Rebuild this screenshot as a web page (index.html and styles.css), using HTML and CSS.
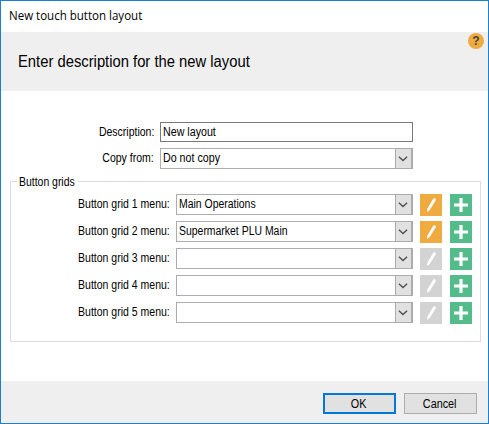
FILE: index.html
```html
<!DOCTYPE html>
<html lang="en">
<head>
<meta charset="utf-8">
<title>New touch button layout</title>
<link rel="stylesheet" href="styles.css">
</head>
<body>
<svg class="defs" width="0" height="0">
  <symbol id="chevron" viewBox="0 0 15 19"><path d="M2.9 7.8 7 11.5 11.1 7.8" fill="none" stroke="#505050" stroke-width="1.4"/></symbol>
  <symbol id="pencil" viewBox="0 0 22 22"><path d="M14.2 4 16 5 15.5 6.7 9.7 16 7.1 18 7.3 14.8 12.8 5.4Z" fill="#fff"/></symbol>
  <symbol id="plus" viewBox="0 0 22 22"><path d="M9.4 4H12.6V9.4H18V12.6H12.6V18H9.4V12.6H4V9.4H9.4Z" fill="#fff"/></symbol>
</svg>
<main class="window">
  <div class="titlebar"><span class="title">New touch button layout</span></div>
  <header class="header">
    <h1>Enter description for the new layout</h1>
    <svg class="help" viewBox="0 0 16 16"><circle cx="8" cy="8" r="8" fill="#f0ab40"/><text x="8" y="12.3" text-anchor="middle">?</text></svg>
  </header>
  <section class="content">
    <div class="field"><label><span>Description:</span></label><div class="input"><span>New layout</span></div></div>
    <div class="field copy"><label><span>Copy from:</span></label><div class="combo"><span>Do not copy</span><svg class="arrow"><use href="#chevron"/></svg></div></div>
    <fieldset class="group">
      <legend><span>Button grids</span></legend>
      <div class="row"><label><span>Button grid 1 menu:</span></label><div class="combo"><span>Main Operations</span><svg class="arrow"><use href="#chevron"/></svg></div><svg class="icon edit"><use href="#pencil"/></svg><svg class="icon add"><use href="#plus"/></svg></div>
      <div class="row"><label><span>Button grid 2 menu:</span></label><div class="combo"><span>Supermarket PLU Main</span><svg class="arrow"><use href="#chevron"/></svg></div><svg class="icon edit"><use href="#pencil"/></svg><svg class="icon add"><use href="#plus"/></svg></div>
      <div class="row"><label><span>Button grid 3 menu:</span></label><div class="combo"><span></span><svg class="arrow"><use href="#chevron"/></svg></div><svg class="icon off"><use href="#pencil"/></svg><svg class="icon add"><use href="#plus"/></svg></div>
      <div class="row"><label><span>Button grid 4 menu:</span></label><div class="combo"><span></span><svg class="arrow"><use href="#chevron"/></svg></div><svg class="icon off"><use href="#pencil"/></svg><svg class="icon add"><use href="#plus"/></svg></div>
      <div class="row"><label><span>Button grid 5 menu:</span></label><div class="combo"><span></span><svg class="arrow"><use href="#chevron"/></svg></div><svg class="icon off"><use href="#pencil"/></svg><svg class="icon add"><use href="#plus"/></svg></div>
    </fieldset>
  </section>
  <footer class="footer"><button class="ok"><span>OK</span></button><button><span>Cancel</span></button></footer>
</main>
</body>
</html>
```

FILE: styles.css
```css
* { box-sizing: border-box; }
body { margin: 0; font: 12px/14px "Liberation Sans", Arial, sans-serif; color: #000; }
.defs { display: block; }
svg { flex: none; }
.window { width: 489px; height: 424px; border: 1px solid #1a80d5; background: #fff; display: flex; flex-direction: column; }
.titlebar { height: 31px; padding: 7px 8px; font: 12px/16px "Open Sans", "Noto Sans", sans-serif; }
.title { display: inline-block; transform: scaleX(.96); transform-origin: left; }
.header { height: 59px; background: #efefef; display: flex; justify-content: space-between; align-items: flex-start; padding: 1px 4px 0 17px; }
h1 { margin: 20px 0 0; font-size: 16px; line-height: 18px; font-weight: 400; white-space: nowrap; transform: scaleX(.924); transform-origin: left; }
.help { width: 16px; height: 16px; }
.help text { font: bold 12px "Liberation Sans", sans-serif; fill: #444; }
.content { flex: 1; padding: 31px 7px 0 9px; }
.field { display: flex; align-items: center; height: 20px; }
.field label { width: 150px; }
.copy { height: 21px; margin-top: 6px; }
.copy label { padding-bottom: 1px; }
label { display: block; text-align: right; padding-right: 6px; white-space: nowrap; }
label span { display: inline-block; transform: scaleX(.875); transform-origin: right; }
.input { width: 253px; height: 20px; border: 1px solid #7a7a7a; padding: 2px; }
.input span, .combo span { display: inline-block; transform: scaleX(.89); transform-origin: left; white-space: nowrap; }
.combo { height: 21px; border: 1px solid #abadb3; display: flex; justify-content: space-between; padding-left: 2px; }
.combo span { padding-top: 2px; }
.row .combo span { transform: scaleX(.87); }
.field .combo { width: 253px; }
.arrow { width: 18px; height: 21px; margin: -1px; border: solid #ababab; border-width: 1px 2px 1px 1px; background: #e1e1e1; }
.group { margin: 12px 0 0; width: 471px; height: 161px; border: 1px solid #dcdcdc; padding: 12px 8px 0 0; position: relative; }
legend { position: absolute; left: 6px; top: -7px; width: 61px; height: 14px; padding: 0 2px; background: #fff; white-space: nowrap; }
legend span { display: inline-block; transform: scaleX(.87); transform-origin: left; }
.row { display: flex; height: 22px; margin-bottom: 5px; }
.row label { width: 165px; padding-top: 3px; }
.row .combo { width: 237px; }
.icon { width: 22px; height: 22px; margin-left: 7px; }
.edit { background: #f0ab40; }
.off { background: #d3d3d3; }
.add { margin-left: 8px; background: #54bc8b; }
.footer { height: 42px; background: #efefef; display: flex; justify-content: flex-end; gap: 8px; padding: 12px 11px 0 0; }
button { width: 73px; height: 21px; padding: 0; font: inherit; color: #000; background: #e1e1e1; border: 1px solid #adadad; border-radius: 0; }
button span { display: inline-block; transform: translateX(-1px) scaleX(.9); }
.ok { border: 2px solid #0078d7; }
```
